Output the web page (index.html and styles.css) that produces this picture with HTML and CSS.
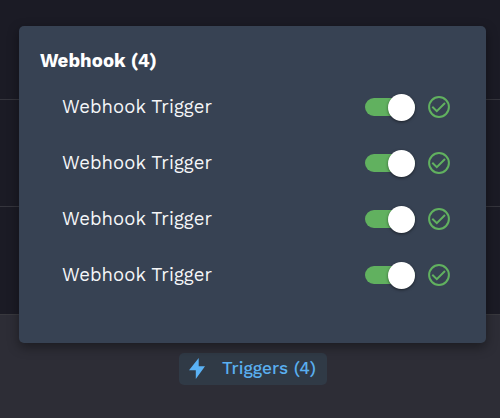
FILE: index.html
```
<!DOCTYPE html>
<html lang="en">
<head>
<meta charset="utf-8">
<title>Triggers</title>
<link rel="stylesheet" href="styles.css">
</head>
<body>
<svg class="symbols" aria-hidden="true">
  <symbol id="check" viewBox="0 0 22 22"><circle cx="11" cy="11" r="9.9"/><path d="M4.3 10.7 8.8 15.1 17 7"/></symbol>
</svg>
<main class="canvas">
  <div class="band"></div>
  <div class="band"></div>
  <div class="band"></div>
  <footer class="toolbar">
    <button class="triggers">
      <svg class="bolt" viewBox="0 0 16 21"><path d="M9.7 0 0 12.3h6.8V21L16 8.3H9.7z"/></svg>
      <span class="triggers-label">Triggers (4)</span>
    </button>
  </footer>
</main>
<section class="popover">
  <h2 class="title">Webhook (4)</h2>
  <ul class="list">
    <li class="row"><span class="name">Webhook Trigger</span><span class="switch"><span class="knob"></span></span><svg class="check"><use href="#check"/></svg></li>
    <li class="row"><span class="name">Webhook Trigger</span><span class="switch"><span class="knob"></span></span><svg class="check"><use href="#check"/></svg></li>
    <li class="row"><span class="name">Webhook Trigger</span><span class="switch"><span class="knob"></span></span><svg class="check"><use href="#check"/></svg></li>
    <li class="row"><span class="name">Webhook Trigger</span><span class="switch"><span class="knob"></span></span><svg class="check"><use href="#check"/></svg></li>
  </ul>
</section>
</body>
</html>
```
FILE: styles.css
```
* { box-sizing: border-box; }
body {
  margin: 0;
  background: #1b1b25;
  font-family: "Work Sans", "Open Sans", "Noto Sans", sans-serif;
  overflow: hidden;
}
.symbols { display: none; }
.canvas {
  display: grid;
  grid-template-rows: 100px 107px 107px 104px;
  height: 418px;
}
.band { border-bottom: 1px solid #35353d; }
.band:nth-child(3) { border-bottom: 0; }
.toolbar {
  display: flex;
  justify-content: center;
  align-items: flex-start;
  padding: 38px 0 0 6px;
  border-top: 1px solid #38383e;
  background: #2d2d36;
}
.triggers {
  display: flex;
  align-items: flex-start;
  width: 148px;
  height: 32px;
  padding: 0 0 0 10px;
  border: 0;
  border-radius: 5px;
  background: #303a46;
  color: #5aaff0;
  font: 500 17.3px/30px "Work Sans", "Open Sans", "Noto Sans", sans-serif;
}
.bolt { width: 16px; height: 21px; margin: 5px 17px 0 0; fill: #5ab2f5; }
.triggers-label { white-space: nowrap; }
.popover {
  position: absolute;
  left: 19px;
  top: 26px;
  width: 467px;
  height: 317px;
  padding: 21px 36px 0 21px;
  border-radius: 5px;
  background: #374253;
  box-shadow: 0 4px 12px rgba(0, 0, 0, .4);
  color: #fff;
}
.title { margin: 0; font-size: 18.6px; font-weight: 700; letter-spacing: .05px; line-height: 28px; }
.list { margin: 4px 0 0; padding: 0 0 0 22px; list-style: none; }
.row { display: flex; align-items: center; height: 56px; }
.name {
  flex: 1;
  color: #f5f6f8;
  font-size: 18.5px;
  font-weight: 400;
  letter-spacing: .05px;
  line-height: 28px;
  white-space: nowrap;
}
.switch {
  display: flex;
  align-items: center;
  justify-content: flex-end;
  width: 50px;
  height: 18px;
  border-radius: 9px;
  background: #61b15f;
}
.knob {
  flex: none;
  width: 27px;
  height: 27px;
  border-radius: 50%;
  background: #fff;
  box-shadow: 0 1px 3px rgba(0, 0, 0, .5);
}
.check {
  width: 22px;
  height: 22px;
  margin-left: 13px;
  fill: none;
  stroke: #61b15f;
  stroke-width: 2;
}
```
